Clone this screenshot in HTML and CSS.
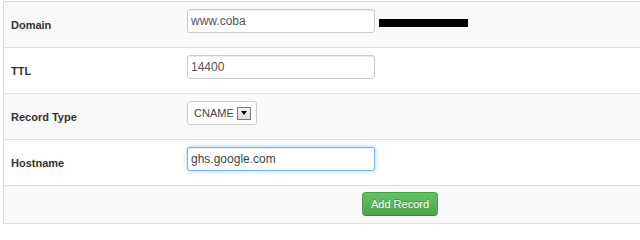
FILE: index.html
```html
<!DOCTYPE html>
<html>
<head>
<meta charset="utf-8">
<link rel="stylesheet" href="styles.css">
</head>
<body>
<form class="record-form">
  <div class="row striped">
    <div class="label">Domain</div>
    <div class="field">
      <input class="text-input" type="text" value="www.coba">
      <span class="redacted"></span>
    </div>
  </div>
  <div class="row">
    <div class="label">TTL</div>
    <div class="field">
      <input class="text-input" type="text" value="14400">
    </div>
  </div>
  <div class="row striped">
    <div class="label">Record Type</div>
    <div class="field">
      <div class="select-box">
        <span class="select-value">CNAME</span>
        <span class="select-arrow"><svg width="6" height="4" viewBox="0 0 6 4"><path d="M0 0H6L3 4Z" fill="#000"/></svg></span>
      </div>
    </div>
  </div>
  <div class="row">
    <div class="label">Hostname</div>
    <div class="field">
      <input class="text-input focused" type="text" value="ghs.google.com">
    </div>
  </div>
  <div class="row striped actions">
    <button type="button" class="btn-success">Add Record</button>
  </div>
</form>
</body>
</html>
```

FILE: styles.css
```css
html, body {
  margin: 0;
  padding: 0;
  background: #fff;
  overflow: hidden;
}

body {
  font-family: "Liberation Sans", Arial, sans-serif;
}

.record-form {
  margin: 1px 0 0 3px;
  width: 637px;
  box-sizing: border-box;
  border-top: 1px solid #dddddd;
  border-left: 1px solid #d8d8d8;
}

.row {
  display: flex;
  height: 45px;
  border-bottom: 1px solid #e0e0e0;
  background: #fff;
}

.row.striped {
  background: #f9f9f9;
}

.label {
  width: 176px;
  padding-left: 7px;
  display: flex;
  align-items: center;
  font-size: 11px;
  font-weight: bold;
  color: #333;
}

.field {
  display: flex;
  align-items: flex-start;
  padding-top: 7px;
}

.text-input {
  box-sizing: border-box;
  width: 188px;
  height: 24px;
  margin: 0;
  padding: 0 3px;
  border: 1px solid #cccccc;
  border-radius: 3px;
  background: #fff;
  box-shadow: inset 0 1px 1px rgba(0,0,0,0.075);
  font-family: "Liberation Sans", Arial, sans-serif;
  font-size: 12px;
  color: #555;
  outline: none;
}

.text-input.focused {
  border-color: rgba(82,168,236,0.8);
  box-shadow: inset 0 1px 1px rgba(0,0,0,0.075), 0 0 4px rgba(82,168,236,0.6);
  color: #444;
}

.redacted {
  display: block;
  width: 89px;
  height: 8px;
  margin: 10px 0 0 4px;
  background: #000;
}

.select-box {
  box-sizing: border-box;
  display: flex;
  align-items: center;
  width: 70px;
  height: 24px;
  padding: 0 5px 0 6px;
  border: 1px solid #cccccc;
  border-radius: 3px;
  background: #fff;
  font-size: 11px;
  color: #444;
}

.select-value {
  flex: 1;
}

.select-arrow {
  box-sizing: border-box;
  display: flex;
  align-items: center;
  justify-content: center;
  width: 14px;
  height: 13px;
  border: 1px solid #7a7a7a;
  background: linear-gradient(#f2f2f2, #dcdcdc);
}

.row.actions {
  height: 38px;
  align-items: flex-start;
  box-sizing: border-box;
  padding: 6px 0 0 358px;
}

.btn-success {
  box-sizing: border-box;
  width: 76px;
  height: 24px;
  padding: 0;
  border: 1px solid #45a045;
  border-bottom-color: #3a8a3a;
  border-radius: 4px;
  background: linear-gradient(#62c462, #4fa24f);
  color: #fff;
  font-family: "Liberation Sans", Arial, sans-serif;
  font-size: 11px;
  text-shadow: 0 -1px 0 rgba(0,0,0,0.25);
  cursor: pointer;
}
```
